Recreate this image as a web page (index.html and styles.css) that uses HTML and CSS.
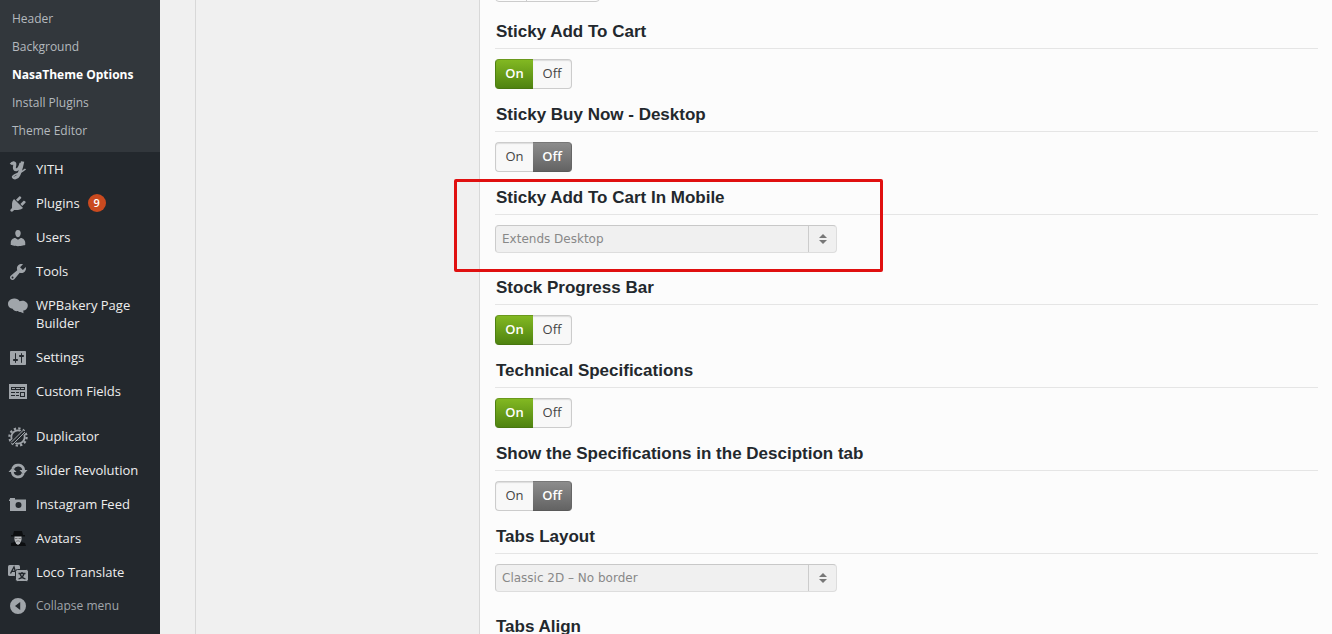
FILE: index.html
```html
<!DOCTYPE html>
<html lang="en">
<head>
    <meta charset="UTF-8">
    <meta name="viewport" content="width=device-width, initial-scale=1.0">
    <title>NasaTheme Options</title>
    <link rel="stylesheet" href="styles.css">
</head>
<body>
    <div class="layout">
        <nav class="sidebar">
            <ul class="submenu">
                <li><a href="#">Header</a></li>
                <li><a href="#">Background</a></li>
                <li><a href="#" class="current">NasaTheme Options</a></li>
                <li><a href="#">Install Plugins</a></li>
                <li><a href="#">Theme Editor</a></li>
            </ul>
            <ul class="menu">
                <li><a href="#">
                    <svg class="icon" viewBox="0 0 20 20"><path class="stroke" stroke-width="3" d="M3 4.500C4.500 2 7.400 2 6.800 5 6 8 6.200 10 8.300 9.800 10.500 9.500 12 7 13 3"/><path class="stroke" stroke-width="3.400" d="M14.600 1.500C13.400 7 12.300 12 10.600 15 9 18.300 5.600 18.300 5.400 16.500"/><path class="stroke" stroke-width="1.600" d="M4.600 17C4.600 13.800 12.500 14 17.500 9"/></svg>
                    <span>YITH</span></a></li>
                <li><a href="#">
                    <svg class="icon" viewBox="0 0 20 20"><path d="M13.11 4.36L9.87 7.6 8 5.73l3.24-3.24c.35-.34 1.05-.2 1.56.32.52.51.66 1.21.31 1.55zm-8 1.77l.91-1.12 9.01 9.01-1.19.84c-.71.71-2.63 1.16-3.82 1.16H6.14L4.9 17.26c-.59.59-1.54.59-2.12 0-.59-.58-.59-1.53 0-2.12l1.24-1.24v-3.88c0-1.13.4-3.19 1.09-3.89zm7.26 3.97l3.24-3.24c.34-.35 1.04-.21 1.55.31.52.51.66 1.21.31 1.55l-3.24 3.25z"/></svg>
                    <span>Plugins</span><span class="badge">9</span></a></li>
                <li><a href="#">
                    <svg class="icon" viewBox="0 0 20 20"><path d="M10 9.25c-2.27 0-2.73-3.44-2.73-3.44C7 4.02 7.82 2 9.97 2c2.16 0 2.98 2.02 2.71 3.81 0 0-.41 3.44-2.68 3.44zM7.280 10L10 11.820 12.72 10c2.39 0 4.52 2.33 4.52 4.53v2.49s-3.65 1.13-7.24 1.13c-3.65 0-7.24-1.13-7.24-1.13v-2.49c0-2.25 1.94-4.48 4.520-4.530z"/></svg>
                    <span>Users</span></a></li>
                <li><a href="#">
                    <svg class="icon" viewBox="0 0 20 20"><path d="M16.68 9.77c-1.34 1.34-3.3 1.67-4.95.99l-5.41 6.52c-.99.99-2.59.99-3.58 0s-.99-2.59 0-3.57l6.52-5.42c-.68-1.65-.35-3.61.99-4.95 1.28-1.28 3.12-1.62 4.72-1.06l-2.89 2.89 2.82 2.82 2.86-2.87c.53 1.58.18 3.39-1.08 4.65zM3.81 16.21c.4.39 1.04.39 1.43 0 .4-.4.4-1.04 0-1.43-.39-.4-1.03-.4-1.43 0-.39.39-.39 1.03 0 1.43z"/></svg>
                    <span>Tools</span></a></li>
                <li><a href="#">
                    <svg class="icon" viewBox="0 0 20 20"><path d="M6 2.500C8.500 2.300 10.500 3.400 11.600 5.200 13 4.600 15 4.400 16.800 5.200 19 6.200 20 8 19.800 10 19.600 12.500 17.500 14.500 15.300 14.600L15.500 17.200 12.500 15.900C11.500 16.300 10.500 16 10 15 7.500 15.500 5.500 14.500 4.600 12.700 2 12.700 0 10.500 0 7.800 0 5 2.500 2.700 6 2.500z"/></svg>
                    <span>WPBakery Page Builder</span></a></li>
                <li><a href="#">
                    <svg class="icon" viewBox="0 0 20 20"><path fill-rule="evenodd" d="M18 16V4c0-.55-.45-1-1-1H3c-.55 0-1 .45-1 1v12c0 .55.45 1 1 1h14c.55 0 1-.45 1-1zM8 11h1c.55 0 1 .45 1 1s-.45 1-1 1H8v1.500c0 .28-.22.5-.5.5s-.5-.22-.5-.5V13H6c-.55 0-1-.45-1-1s.45-1 1-1h1V5.500c0-.28.22-.5.5-.5s.5.22.5.5V11zm5-2h-1c-.55 0-1-.45-1-1s.45-1 1-1h1V5.500c0-.28.22-.5.5-.5s.5.22.5.5V7h1c.55 0 1 .45 1 1s-.45 1-1 1h-1v5.500c0 .28-.22.5-.5.5s-.5-.22-.5-.5V9z"/></svg>
                    <span>Settings</span></a></li>
                <li><a href="#">
                    <svg class="icon" viewBox="0 0 20 20"><path fill-rule="evenodd" d="M1 2h18v15H1zM3 5v3h14V5zM3 10v1h4v-1zM8 10v1h3v-1zM12 10v5h5v-5zM3 13v1h4v-1zM8 13v1h3v-1z"/><path d="M4 6h3v1H4zM8 6h4v1H8zM13 6h3v1h-3zM13 11h3v3h-3z"/></svg>
                    <span>Custom Fields</span></a></li>
            </ul>
            <ul class="menu">
                <li><a href="#">
                    <svg class="icon" viewBox="0 0 20 20"><circle class="stroke" cx="10" cy="10" r="6.700" stroke-width="1.800"/><circle class="stroke" cx="10" cy="10" r="8.600" stroke-width="2.200" stroke-dasharray="2.300 2.200"/><path class="gap" stroke-width="5" d="M4 16L16 4"/><path class="stroke" stroke-width="1" d="M3 15.500L15.500 3M5 17L17 5"/></svg>
                    <span>Duplicator</span></a></li>
                <li><a href="#">
                    <svg class="icon" viewBox="0 0 20 20"><path class="stroke" stroke-width="2.800" d="M4.800 7.500A5.700 5.700 0 0 1 15.700 9.500M15.200 12.500A5.700 5.700 0 0 1 4.300 10.500"/><path d="M11.500 9H19.500L15.500 13.500zM.5 11H8.500L4.500 6.500z"/></svg>
                    <span>Slider Revolution</span></a></li>
                <li><a href="#">
                    <svg class="icon" viewBox="0 0 20 20"><path fill-rule="evenodd" d="M2 3h5v1.500h11V16H2V6h-1V4.500h1zM10.500 7a3 3 0 1 0 0 6 3 3 0 0 0 0-6z"/></svg>
                    <span>Instagram Feed</span></a></li>
                <li><a href="#">
                    <svg class="icon" viewBox="0 0 20 20"><path class="ink" d="M6 2h8l1 4h2v1.500H3V6h2zM3 14l4-1h6l4 1 1 3H3z"/><path class="face" d="M6.500 7.500h7V11L12 14.500 10 16l-2-1.500L6.500 11z"/><path class="shade" d="M7 9h2.500v1H7zM10.500 9H13v1h-2.500zM8 12l2-.8 2 .8v.8l-2-.5-2 .5z"/></svg>
                    <span>Avatars</span></a></li>
                <li><a href="#">
                    <svg class="icon" viewBox="0 0 20 20"><rect x="0" y="2" width="12" height="11" rx="1.500"/><path class="mark" d="M2.500 10.500L6 4l2 6.500M4 8.300h4"/><rect class="tile" x="7.500" y="6.500" width="13" height="12" rx="2"/><path class="mark" d="M10.500 10.500h7M14 9v1.500M16 10.500c-.5 2.500-2.500 4.500-5.500 5.500M12 10.500c.5 2.500 2.500 4.500 5.500 5.500"/></svg>
                    <span>Loco Translate</span></a></li>
                <li><button type="button" class="collapse">
                    <svg class="icon" viewBox="0 0 20 20"><path fill-rule="evenodd" d="M10 2a8 8 0 1 0 0 16 8 8 0 0 0 0-16zM12.200 6v8L7 10z"/></svg>
                    <span>Collapse menu</span></button></li>
            </ul>
        </nav>

        <div class="tabs-column"></div>

        <main class="options">
            <div class="number-field"><span></span></div>

            <fieldset class="option">
                <legend>Sticky Add To Cart</legend>
                <div class="switch">
                    <label><input type="radio" name="sticky_cart" checked><span class="on">On</span></label>
                    <label><input type="radio" name="sticky_cart"><span class="off">Off</span></label>
                </div>
            </fieldset>

            <fieldset class="option">
                <legend>Sticky Buy Now - Desktop</legend>
                <div class="switch">
                    <label><input type="radio" name="sticky_buy"><span class="on">On</span></label>
                    <label><input type="radio" name="sticky_buy" checked><span class="off">Off</span></label>
                </div>
            </fieldset>

            <div class="option highlighted">
                <label class="title" for="stickyMobile">Sticky Add To Cart In Mobile</label>
                <div class="select">
                    <select id="stickyMobile">
                        <option>Extends Desktop</option>
                    </select>
                    <svg class="arrows" viewBox="0 0 8 10"><path d="M4 0l4 4H0zM0 6h8l-4 4z"/></svg>
                </div>
            </div>

            <fieldset class="option">
                <legend>Stock Progress Bar</legend>
                <div class="switch">
                    <label><input type="radio" name="stock_bar" checked><span class="on">On</span></label>
                    <label><input type="radio" name="stock_bar"><span class="off">Off</span></label>
                </div>
            </fieldset>

            <fieldset class="option">
                <legend>Technical Specifications</legend>
                <div class="switch">
                    <label><input type="radio" name="tech_specs" checked><span class="on">On</span></label>
                    <label><input type="radio" name="tech_specs"><span class="off">Off</span></label>
                </div>
            </fieldset>

            <fieldset class="option">
                <legend>Show the Specifications in the Desciption tab</legend>
                <div class="switch">
                    <label><input type="radio" name="specs_tab"><span class="on">On</span></label>
                    <label><input type="radio" name="specs_tab" checked><span class="off">Off</span></label>
                </div>
            </fieldset>

            <div class="option">
                <label class="title" for="tabsLayout">Tabs Layout</label>
                <div class="select">
                    <select id="tabsLayout">
                        <option>Classic 2D – No border</option>
                    </select>
                    <svg class="arrows" viewBox="0 0 8 10"><path d="M4 0l4 4H0zM0 6h8l-4 4z"/></svg>
                </div>
            </div>

            <div class="option">
                <label class="title" for="tabsAlign">Tabs Align</label>
                <div class="select">
                    <select id="tabsAlign"></select>
                </div>
            </div>
        </main>
    </div>
</body>
</html>
```
FILE: styles.css
```css
*,
*::after {
    box-sizing: border-box;
}

body {
    margin: 0;
    background: #f0f0f0;
    font-family: "Segoe UI", "Open Sans", "Noto Sans", sans-serif;
    font-size: 13px;
    overflow: hidden;
}

.layout {
    display: flex;
    height: 100vh;
    overflow: hidden;
}

/* Admin menu */
.sidebar {
    flex: 0 0 160px;
    background: #23282d;
}

.sidebar ul {
    list-style: none;
    margin: 0;
    padding: 0;
}

.sidebar .submenu {
    background: #32373c;
    padding: 5px 0 7px;
}

.submenu a {
    display: block;
    padding: 5px 12px;
    font-size: 12px;
    line-height: 18px;
    color: #b4b9be;
    text-decoration: none;
}

.submenu .current {
    color: #fff;
    font-weight: 700;
}

.menu + .menu {
    margin-top: 11px;
}

.menu a,
.collapse {
    display: flex;
    align-items: flex-start;
    gap: 8px;
    width: 100%;
    padding: 8px;
    font-family: inherit;
    font-size: 13px;
    line-height: 18px;
    color: #eee;
    text-align: left;
    text-decoration: none;
}

.collapse {
    border: none;
    background: none;
    font-size: 12px;
    color: #a0a5aa;
    cursor: pointer;
}

.menu a:hover,
.submenu a:hover {
    color: #00b9eb;
}

.icon {
    flex: none;
    width: 20px;
    height: 20px;
    margin-bottom: -2px;
    fill: #a0a5aa;
}

.collapse .icon {
    margin: -1px 0;
}

.icon .stroke {
    fill: none;
    stroke: #a0a5aa;
}

.icon .gap {
    fill: none;
    stroke: #23282d;
}

.icon .mark {
    fill: none;
    stroke: #23282d;
    stroke-width: 1.3;
}

.icon .tile {
    stroke: #23282d;
}

.icon .ink {
    fill: #0c0e10;
}

.icon .face {
    fill: #b9bcbf;
}

.icon .shade {
    fill: #777;
}

.badge {
    width: 18px;
    height: 18px;
    border-radius: 9px;
    background: #ca4a1f;
    color: #fff;
    font-size: 11px;
    font-weight: 600;
    text-align: center;
}

/* Options panel */
.tabs-column {
    flex: 0 0 285px;
    margin-left: 35px;
    border: solid #d8d8d8;
    border-width: 0 1px;
}

.options {
    flex: 1;
    padding: 0 14px 0 15px;
    background: #fcfcfc;
}

/* Scrolled past the top edge */
.number-field {
    display: flex;
    width: 105px;
    height: 28px;
    margin: -26px 0 19px;
    border: 1px solid #ccc;
    border-radius: 4px;
}

.number-field span {
    width: 31px;
    border-right: 1px solid #ccc;
}

.option {
    min-width: 0;
    margin: 0 0 15px;
    padding: 0;
    border: none;
}

.option legend,
.option .title {
    display: block;
    width: 100%;
    height: 28px;
    margin-bottom: 10px;
    padding: 0 1px;
    border-bottom: 1px solid #e5e5e5;
    font-family: "Liberation Sans", Arial, sans-serif;
    font-size: 17px;
    font-weight: bold;
    line-height: 22px;
    color: #23282d;
}

.switch {
    display: inline-flex;
    vertical-align: top;
    height: 30px;
}

.switch label {
    cursor: pointer;
}

.switch input {
    position: absolute;
    opacity: 0;
}

.switch span {
    display: block;
    width: 39px;
    height: 30px;
    border: 1px solid #ccc;
    background: #f8f8f8;
    box-shadow: inset 0 1px 1px #ddd;
    line-height: 26px;
    text-align: center;
    color: #444;
}

.switch .on {
    width: 38px;
    border-right: none;
    border-radius: 4px 0 0 4px;
}

.switch .off {
    border-left: none;
    border-radius: 0 4px 4px 0;
}

.switch input:checked + span {
    color: #fff;
    font-weight: 600;
    box-shadow: none;
}

.switch input:checked + .on {
    background: linear-gradient(#82b822, #4f8310);
    border-color: #6a981c #4d7f12 #48760f;
}

.switch input:checked + .off {
    background: linear-gradient(#8c8c8c, #636363);
    border-color: #777 #666 #5a5a5a;
}

.select {
    position: relative;
    max-width: 342px;
    margin-bottom: 24px;
}

.select select {
    display: block;
    appearance: none;
    width: 100%;
    height: 28px;
    padding: 0 36px 0 6px;
    border: 1px solid #ddd;
    border-top-color: #c8c8c8;
    border-left-color: #ccc;
    border-radius: 4px;
    background: #f0f0f0;
    font-family: "Lucida Grande", "DejaVu Sans", sans-serif;
    font-size: 12px;
    color: #888;
}

.select::after {
    content: "";
    position: absolute;
    top: 1px;
    bottom: 1px;
    right: 28px;
    border-left: 1px solid #ccc;
}

.arrows {
    position: absolute;
    top: 9px;
    right: 10px;
    width: 8px;
    height: 10px;
    fill: #777;
}

.highlighted {
    position: relative;
}

/* Red frame around the option */
.highlighted::after {
    content: "";
    position: absolute;
    top: -8px;
    left: -41px;
    width: 429px;
    height: 93px;
    border: 3px solid #e01010;
    border-radius: 2px;
    pointer-events: none;
}
```
